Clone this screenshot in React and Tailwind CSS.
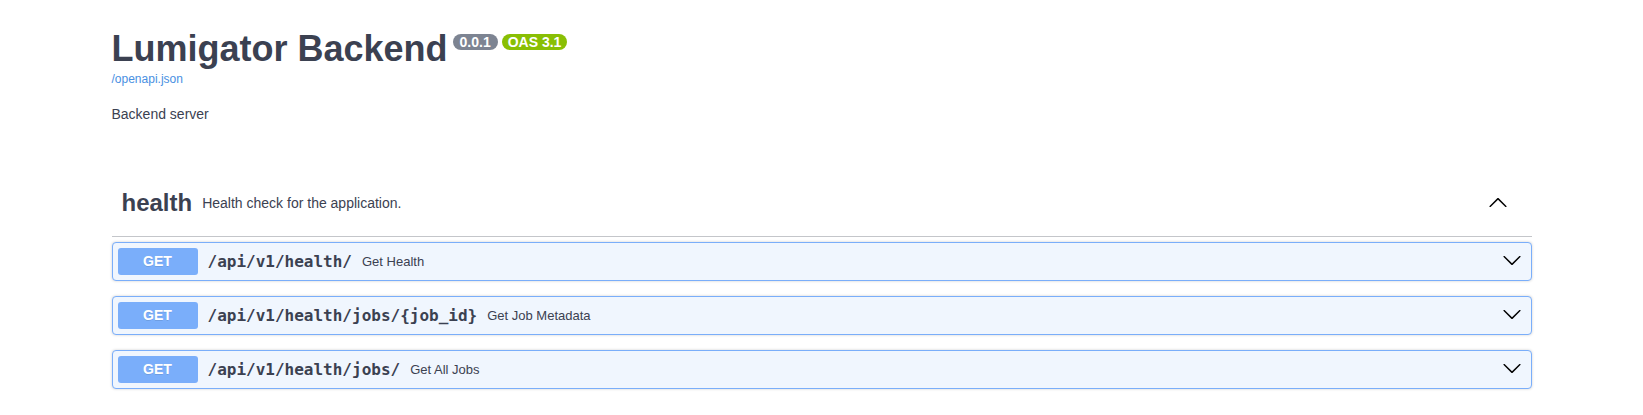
import React from "react"

const ops = [
  { path: "/api/v1/health/", summary: "Get Health" },
  { path: "/api/v1/health/jobs/{job_id}", summary: "Get Job Metadata" },
  { path: "/api/v1/health/jobs/", summary: "Get All Jobs" },
]

function ArrowDown() {
  return (
    <svg width="20" height="20" viewBox="0 0 20 20" className="mb-[3px] mr-[4px] ml-auto shrink-0" fill="#000">
      <path d="M17.418 6.109c.272-.268.709-.268.979 0s.271.701 0 .969l-7.908 7.83c-.27.268-.707.268-.979 0l-7.908-7.83c-.27-.268-.27-.701 0-.969.271-.268.709-.268.979 0L10 13.25l7.418-7.141z" />
    </svg>
  )
}

function ArrowUp() {
  return (
    <svg width="20" height="20" viewBox="0 0 20 20" className="mb-[3px] mr-[4px] ml-auto shrink-0" fill="#000">
      <path d="M17.418 14.908c.272.268.709.268.979 0s.271-.701 0-.969l-7.908-7.83c-.27-.268-.707-.268-.979 0l-7.908 7.83c-.27.268-.27.701 0 .969.271.268.709.268.979 0L10 7.767l7.418 7.141z" />
    </svg>
  )
}

function Opblock({ path, summary }) {
  return (
    <div className="mb-[15px] rounded-[4px] border border-[#7aaefa] bg-[#f0f6fe] shadow-[0_0_3px_rgba(0,0,0,0.19)]">
      <div className="flex items-center p-[5px]">
        <span className="w-[80px] shrink-0 rounded-[3px] bg-[#7aaefa] py-[6px] text-center text-[14px] font-bold leading-[15px] text-white [text-shadow:0_1px_0_rgba(0,0,0,0.1)]">
          GET
        </span>
        <span className="px-[10px] font-['DejaVu_Sans_Mono',monospace] text-[16px] font-bold text-[#3b4151]">{path}</span>
        <span className="text-[13px] text-[#3b4151]">{summary}</span>
        <ArrowDown />
      </div>
    </div>
  )
}

export default function App() {
  return (
    <div className="min-h-[415px] bg-white font-['Liberation_Sans',Arial,sans-serif] text-[#3b4151]">
      <div className="mx-auto max-w-[1460px] px-5">
        <div className="pt-[28px]">
          <div className="flex items-start">
            <h2 className="text-[36px] font-bold leading-[41px]">Lumigator Backend</h2>
            <span className="ml-[5px] mt-[6px] h-[16px] rounded-full bg-[#7d8492] px-[7px] text-[14px] font-bold leading-[16px] text-white">
              0.0.1
            </span>
            <span className="ml-[4px] mt-[6px] h-[16px] rounded-full bg-[#89bf04] px-[6px] text-[14px] font-bold leading-[16px] text-white">
              OAS 3.1
            </span>
          </div>
          <a className="mt-[3px] block text-[12px] leading-[14px] text-[#4990e2]">/openapi.json</a>
          <p className="mt-[20px] text-[14px] leading-[16px]">Backend server</p>
        </div>

        <div className="mt-[57px] flex items-center border-b border-[rgba(59,65,81,0.3)] pb-[19px] pl-[10px] pr-[20px] pt-[10px]">
          <h3 className="text-[24px] font-bold leading-[28px]">health</h3>
          <span className="px-[10px] text-[14px] leading-[16px]">Health check for the application.</span>
          <ArrowUp />
        </div>

        <div className="mt-[5px]">
          {ops.map((op) => (
            <Opblock key={op.path} path={op.path} summary={op.summary} />
          ))}
        </div>
      </div>
    </div>
  )
}
